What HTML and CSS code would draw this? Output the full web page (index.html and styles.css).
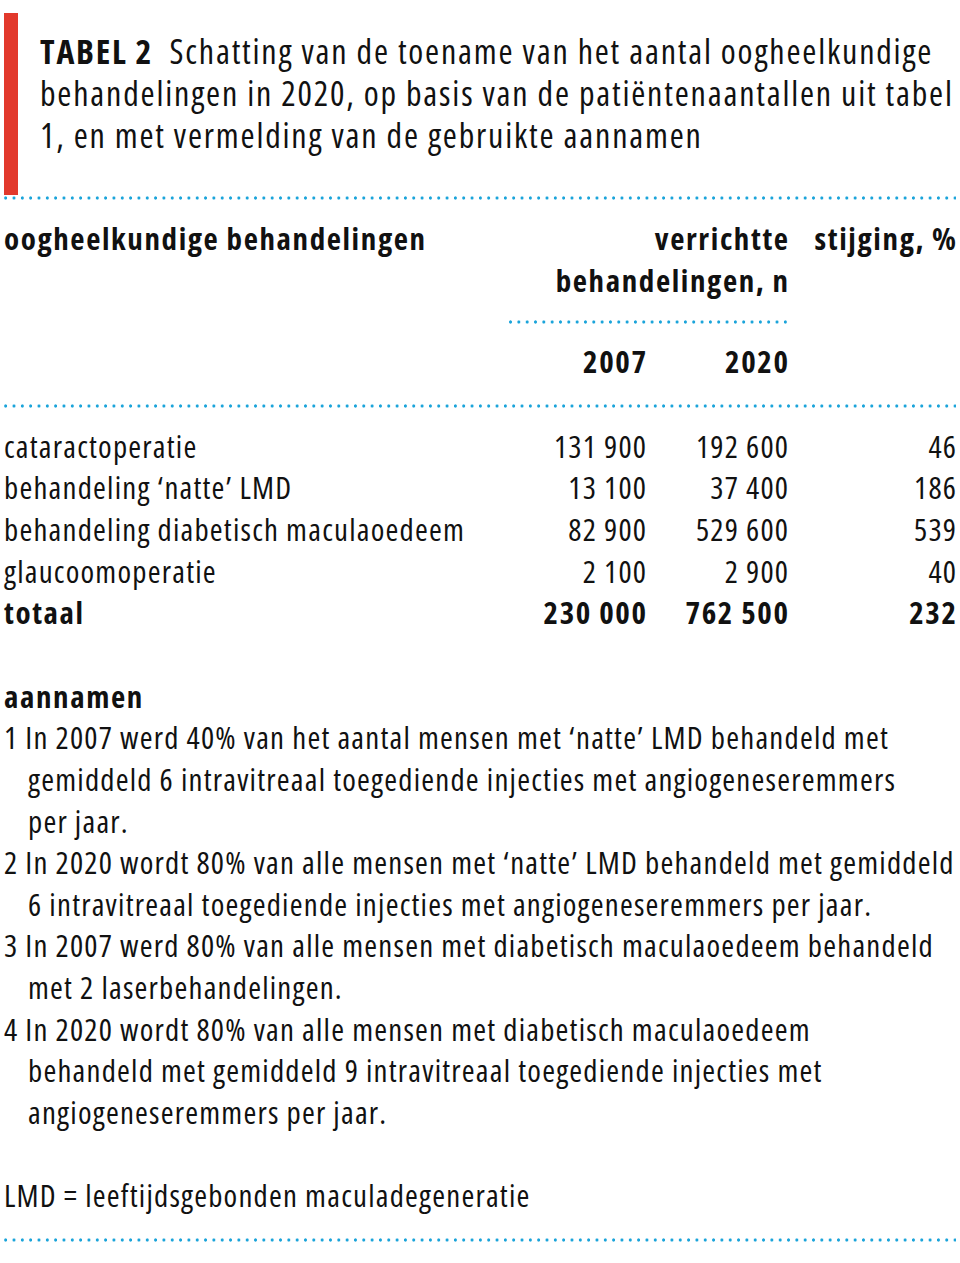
FILE: index.html
```html
<!DOCTYPE html>
<html lang="nl">
<head>
<meta charset="utf-8">
<title>Tabel 2</title>
<link rel="stylesheet" href="styles.css">
</head>
<body>
<div class="page">
  <header class="caption">
    <div class="bar"></div>
    <h1 class="caption-text"><b class="label">TABEL 2</b>&nbsp; Schatting van de toename van het aantal oogheelkundige<br>behandelingen in 2020, op basis van de patiëntenaantallen uit tabel<br>1, en met vermelding van de gebruikte aannamen</h1>
  </header>
  <div class="dots"></div>

  <div class="table">
    <div class="th c1">oogheelkundige behandelingen</div>
    <div class="th c23 right">verrichtte<br>behandelingen, n</div>
    <div class="th c4 right">stijging, %</div>
    <div class="dots sub c23"></div>
    <div class="th c2 right yr">2007</div>
    <div class="th c3 right yr">2020</div>
  </div>
  <div class="dots"></div>

  <div class="table body">
    <div class="c1">cataractoperatie</div><div class="right">131 900</div><div class="right">192 600</div><div class="right">46</div>
    <div class="c1">behandeling ‘natte’ LMD</div><div class="right">13 100</div><div class="right">37 400</div><div class="right">186</div>
    <div class="c1">behandeling diabetisch maculaoedeem</div><div class="right">82 900</div><div class="right">529 600</div><div class="right">539</div>
    <div class="c1">glaucoomoperatie</div><div class="right">2 100</div><div class="right">2 900</div><div class="right">40</div>
    <div class="c1 strong">totaal</div><div class="right strong">230 000</div><div class="right strong">762 500</div><div class="right strong">232</div>
  </div>

  <section class="notes">
    <h2 class="notes-title">aannamen</h2>
    <p class="note">1 In 2007 werd 40% van het aantal mensen met ‘natte’ LMD behandeld met<br>gemiddeld 6 intravitreaal toegediende injecties met angiogeneseremmers<br>per jaar.</p>
    <p class="note">2 In 2020 wordt 80% van alle mensen met ‘natte’ LMD behandeld met gemiddeld<br>6 intravitreaal toegediende injecties met angiogeneseremmers per jaar.</p>
    <p class="note">3 In 2007 werd 80% van alle mensen met diabetisch maculaoedeem behandeld<br>met 2 laserbehandelingen.</p>
    <p class="note">4 In 2020 wordt 80% van alle mensen met diabetisch maculaoedeem<br>behandeld met gemiddeld 9 intravitreaal toegediende injecties met<br>angiogeneseremmers per jaar.</p>
    <p class="abbr">LMD = leeftijdsgebonden maculadegeneratie</p>
  </section>
  <div class="dots"></div>
</div>
</body>
</html>
```
FILE: styles.css
```css
* { box-sizing: border-box; }
html, body { margin: 0; padding: 0; background: #fff; }
body {
  font-family: "Open Sans", "Noto Sans", sans-serif;
  font-stretch: 75%;
  font-size: 31px;
  line-height: 41.6px;
  letter-spacing: 1.2px;
  color: #111;
}
.page { width: 960px; padding: 13px 4px 0 4px; }

.caption { display: flex; align-items: flex-start; height: 183px; }
.bar { width: 14px; height: 182px; background: #e2392c; flex: none; }
.caption-text {
  margin: 17px 0 0 22px;
  font-size: 34px;
  line-height: 42px;
  font-weight: 400;
  letter-spacing: 1.8px;
  white-space: nowrap;
}
.label { font-weight: 700; letter-spacing: 1.8px; }

.dots {
  height: 4px;
  background-image: radial-gradient(circle, #1ba4da 1.3px, rgba(27,164,218,0) 1.9px);
  background-size: 8.33px 4px;
  background-repeat: repeat-x;
  background-position: -2.5px 0;
}

.table {
  display: grid;
  grid-template-columns: 501px 141px 142px 168px;
}
.table:not(.body) { padding: 18px 0 21px; }
.th { font-weight: 700; letter-spacing: 1.6px; }
.c1 { grid-column: 1; }
.c2 { grid-column: 2; }
.c3 { grid-column: 3; }
.c4 { grid-column: 4; grid-row: 1; }
.c23 { grid-column: 2 / 4; }
.right { text-align: right; margin-right: -1.2px; }
.th.right { margin-right: -1.6px; }
.dots.sub { margin: 19px 0 17px; background-position: right -1.5px top 0; }
.yr { grid-row: 3; }
.body { padding: 18px 0 0; }
.strong { font-weight: 700; letter-spacing: 1.6px; }
.right.strong { margin-right: -1.6px; }

.notes { padding-top: 42px; padding-bottom: 22px; }
.notes-title { margin: 0; font-size: 31px; line-height: 41.6px; font-weight: 700; letter-spacing: 1.6px; }
.note {
  margin: 0;
  padding-left: 24px;
  text-indent: -24px;
  white-space: nowrap;
}
.abbr { margin: 41.6px 0 0; }
```
